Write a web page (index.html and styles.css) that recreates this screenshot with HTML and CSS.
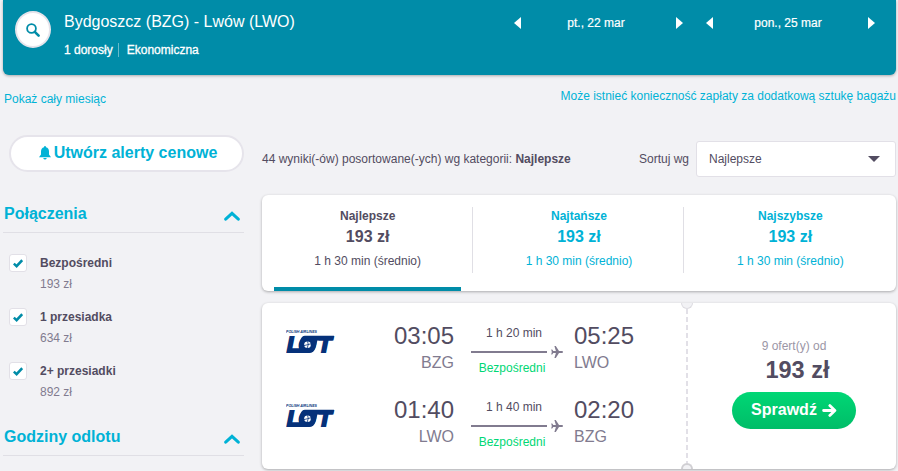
FILE: index.html
```html
<!DOCTYPE html>
<html lang="pl">
<head>
  <meta charset="UTF-8">
  <meta name="viewport" content="width=device-width, initial-scale=1.0">
  <title>Bydgoszcz (BZG) - Lwów (LWO)</title>
  <link rel="stylesheet" href="styles.css">
</head>
<body>
  <svg class="sprite" width="0" height="0">
    <symbol id="check" viewBox="0 0 10 9">
      <path d="M0.8 4.6 L3.6 7.2 L9.2 1.2" fill="none" stroke="#008ca8" stroke-width="2.5"/>
    </symbol>
    <symbol id="chevron" viewBox="0 0 16 10">
      <path d="M1.7 8.2 L8 2.4 L14.3 8.2" fill="none" stroke="#00b2d6" stroke-width="3" stroke-linecap="round"/>
    </symbol>
    <symbol id="plane" viewBox="0 0 12 12">
      <path d="M3.4 0 H4.8 L8 5 H11 Q12 5.2 12 6 Q12 6.8 11 7 H8 L4.8 12 H3.4 L4.9 7 H2.3 L1.2 8.6 H0.2 L0.8 6 L0.2 3.4 H1.2 L2.3 5 H4.9 Z" fill="#817b8f"/>
    </symbol>
  </svg>

  <div class="page">
    <header class="header">
      <button class="search-button">
        <svg width="14" height="14" viewBox="0 0 14 14"><circle cx="5.5" cy="5.5" r="4.4" fill="none" stroke="#008ca8" stroke-width="1.8"/><path d="M8.8 8.8 L12.6 12.6" stroke="#008ca8" stroke-width="2.6" stroke-linecap="round"/></svg>
      </button>
      <div class="summary">
        <h1>Bydgoszcz (BZG) - Lwów (LWO)</h1>
        <p><span class="passengers">1 dorosły</span><span class="cabin">Ekonomiczna</span></p>
      </div>
      <div class="dates">
        <div class="date"><i class="arrow-left"></i><span>pt., 22 mar</span><i class="arrow-right"></i></div>
        <div class="date"><i class="arrow-left"></i><span>pon., 25 mar</span><i class="arrow-right"></i></div>
      </div>
    </header>

    <div class="links">
      <a class="month-link">Pokaż cały miesiąc</a>
      <a class="baggage-link">Może istnieć konieczność zapłaty za dodatkową sztukę bagażu</a>
    </div>

    <div class="content">
      <aside class="sidebar">
        <button class="alert-button">
          <svg width="12" height="14" viewBox="0 0 12 14"><path d="M6 0 Q7 0 7 1.2 Q10 2 10 5.5 V8.6 L12 11.2 H0 L2 8.6 V5.5 Q2 2 5 1.2 Q5 0 6 0 Z M4.2 12 H7.8 Q7.3 13.6 6 13.6 Q4.7 13.6 4.2 12 Z" fill="#00b2d6"/></svg>
          <span>Utwórz alerty cenowe</span>
        </button>
        <div class="filter-title"><h2>Połączenia</h2><svg width="16" height="10"><use href="#chevron"/></svg></div>
        <ul class="filters">
          <li>
            <span class="checkbox"><svg width="10" height="9"><use href="#check"/></svg></span>
            <div><b>Bezpośredni</b><span>193 zł</span></div>
          </li>
          <li>
            <span class="checkbox"><svg width="10" height="9"><use href="#check"/></svg></span>
            <div><b>1 przesiadka</b><span>634 zł</span></div>
          </li>
          <li>
            <span class="checkbox"><svg width="10" height="9"><use href="#check"/></svg></span>
            <div><b>2+ przesiadki</b><span>892 zł</span></div>
          </li>
        </ul>
        <div class="filter-title"><h2>Godziny odlotu</h2><svg width="16" height="10"><use href="#chevron"/></svg></div>
      </aside>

      <main class="results">
        <div class="sort-row">
          <p>44 wyniki(-ów) posortowane(-ych) wg kategorii: <b>Najlepsze</b></p>
          <span class="sort-label">Sortuj wg</span>
          <div class="select"><span>Najlepsze</span><i class="caret"></i></div>
        </div>

        <div class="card tabs">
          <div class="tab active"><b>Najlepsze</b><strong>193 zł</strong><span>1 h 30 min (średnio)</span></div>
          <div class="tab"><b>Najtańsze</b><strong>193 zł</strong><span>1 h 30 min (średnio)</span></div>
          <div class="tab"><b>Najszybsze</b><strong>193 zł</strong><span>1 h 30 min (średnio)</span></div>
        </div>

        <div class="card ticket">
          <div class="legs">
            <div class="leg">
              <svg class="logo" width="52" height="30" viewBox="0 0 52 30">
                <text x="0" y="3.2" class="lot-small" textLength="31" lengthAdjust="spacingAndGlyphs">POLISH AIRLINES</text>
                <path d="M19 5.7 H48 L46.6 10.4 H31.4 L29.4 18 Q28 23 23 23 H5 L6 18.4 H13 Q12.5 16 14 11 Q15.5 5.7 19 5.7 Z" fill="#05317a"/>
                <text x="1 12.5 32" y="22" class="lot-big">LOT</text>
                <circle cx="21.5" cy="14.7" r="5.3" fill="#05317a"/>
                <circle cx="21.5" cy="14.7" r="3.3" fill="#fff"/>
                <path d="M18 15.6 L25 13.8 M21.2 18 L22.3 14.5 L21.5 11.4" fill="none" stroke="#05317a" stroke-width="0.8"/>
              </svg>
              <div class="stop depart"><span class="time">03:05</span><span class="code">BZG</span></div>
              <div class="route">
                <span class="duration">1 h 20 min</span>
                <div class="line"><hr><svg width="12" height="12"><use href="#plane"/></svg></div>
                <span class="direct">Bezpośredni</span>
              </div>
              <div class="stop"><span class="time">05:25</span><span class="code">LWO</span></div>
            </div>
            <div class="leg">
              <svg class="logo" width="52" height="30" viewBox="0 0 52 30">
                <text x="0" y="3.2" class="lot-small" textLength="31" lengthAdjust="spacingAndGlyphs">POLISH AIRLINES</text>
                <path d="M19 5.7 H48 L46.6 10.4 H31.4 L29.4 18 Q28 23 23 23 H5 L6 18.4 H13 Q12.5 16 14 11 Q15.5 5.7 19 5.7 Z" fill="#05317a"/>
                <text x="1 12.5 32" y="22" class="lot-big">LOT</text>
                <circle cx="21.5" cy="14.7" r="5.3" fill="#05317a"/>
                <circle cx="21.5" cy="14.7" r="3.3" fill="#fff"/>
                <path d="M18 15.6 L25 13.8 M21.2 18 L22.3 14.5 L21.5 11.4" fill="none" stroke="#05317a" stroke-width="0.8"/>
              </svg>
              <div class="stop depart"><span class="time">01:40</span><span class="code">LWO</span></div>
              <div class="route">
                <span class="duration">1 h 40 min</span>
                <div class="line"><hr><svg width="12" height="12"><use href="#plane"/></svg></div>
                <span class="direct">Bezpośredni</span>
              </div>
              <div class="stop"><span class="time">02:20</span><span class="code">BZG</span></div>
            </div>
          </div>
          <div class="offer">
            <i class="notch notch-top"></i>
            <i class="notch notch-bottom"></i>
            <span class="offer-count">9 ofert(y) od</span>
            <span class="offer-price">193 zł</span>
            <button class="offer-button">Sprawdź
              <svg width="15" height="13" viewBox="0 0 15 13"><path d="M1.6 6.5 H12.5 M7.8 1.6 L12.9 6.5 L7.8 11.4" fill="none" stroke="#fff" stroke-width="2.8" stroke-linecap="round" stroke-linejoin="round"/></svg>
            </button>
          </div>
        </div>
      </main>
    </div>
  </div>
</body>
</html>
```

FILE: styles.css
```css
* {
  box-sizing: border-box;
}
body {
  margin: 0;
  background-color: #f2f2f5;
  font-family: 'Liberation Sans', Arial, sans-serif;
  font-size: 12px;
  line-height: 18px;
  color: #524c61;
  overflow: hidden;
}
h1, h2, p, ul {
  margin: 0;
  padding: 0;
}
button {
  font-family: inherit;
  padding: 0;
  cursor: pointer;
}
svg {
  display: block;
  flex-shrink: 0;
}
.sprite {
  position: absolute;
}
.page {
  height: 471px;
  padding: 0 2px 0 3px;
  overflow: hidden;
}

/* header */
.header {
  display: flex;
  height: 75px;
  padding: 11px 21px 0 12px;
  background-color: #008ca8;
  border-radius: 0 0 6px 6px;
  box-shadow: 0 1px 3px rgba(0, 0, 0, 0.3);
  color: #fff;
}
.search-button {
  display: flex;
  justify-content: center;
  align-items: center;
  width: 36px;
  height: 37px;
  border: 2px solid #e6e4eb;
  border-radius: 50%;
  background-color: #fff;
}
.summary {
  flex: 1;
  padding-left: 13px;
}
.summary h1 {
  font-size: 16px;
  font-weight: normal;
  line-height: 22px;
}
.summary p {
  display: flex;
  align-items: center;
  margin-top: 9px;
  line-height: 16px;
  -webkit-text-stroke: 0.3px #fff;
}
.passengers {
  padding-right: 5px;
  border-right: 1px solid #66bacb;
  line-height: 14px;
}
.cabin {
  padding-left: 8px;
}
.dates {
  display: flex;
  gap: 23px;
}
.date {
  display: flex;
  justify-content: space-between;
  align-items: center;
  width: 169px;
  height: 24px;
  -webkit-text-stroke: 0.2px #fff;
}
.date span {
  margin-right: 5px;
}
.arrow-left, .arrow-right {
  border-top: 6px solid transparent;
  border-bottom: 6px solid transparent;
}
.arrow-left {
  border-right: 7px solid #fff;
}
.arrow-right {
  border-left: 7px solid #fff;
}

.links {
  display: flex;
  justify-content: space-between;
  height: 60px;
  padding-top: 12px;
  color: #00b2d6;
}
.month-link {
  padding: 3px 0 0 1px;
}

/* filters */
.content {
  display: flex;
  gap: 18px;
}
.sidebar {
  width: 241px;
}
.alert-button {
  display: flex;
  justify-content: center;
  align-items: center;
  gap: 3px;
  width: 235px;
  height: 37px;
  margin: 0 0 24px 6px;
  padding: 0 0 1px 3px;
  border: 2px solid #e6e4eb;
  border-radius: 19px;
  background-color: #fff;
  color: #00b2d6;
  font-size: 16px;
  font-weight: bold;
}
.filter-title {
  display: flex;
  justify-content: space-between;
  align-items: center;
  height: 37px;
  padding: 0 4px 0 1px;
  border-bottom: 1px solid #e0dfe5;
  color: #00b2d6;
}
.filter-title h2 {
  font-size: 16px;
  line-height: 34px;
}
.filter-title svg {
  margin-top: 3px;
}
.filters {
  height: 186px;
  padding: 21px 0 0 6px;
  list-style: none;
}
.filters li {
  display: flex;
  gap: 13px;
  height: 54px;
}
.filters b, .filters div span {
  display: block;
}
.filters div span {
  margin-top: 3px;
  color: #817b8f;
}
.checkbox {
  display: flex;
  justify-content: center;
  align-items: center;
  width: 18px;
  height: 18px;
  border: 1px solid #e2e0e7;
  border-radius: 3px;
  background-color: #fff;
}

/* results */
.results {
  width: 634px;
}
.sort-row {
  display: flex;
  align-items: center;
  height: 36px;
  margin: 6px 0 18px;
}
.sort-row p {
  flex: 1;
}
.sort-label {
  margin-right: 7px;
}
.select {
  display: flex;
  justify-content: space-between;
  align-items: center;
  width: 200px;
  height: 36px;
  padding: 0 15px 0 12px;
  border: 1px solid #e2e0e7;
  border-radius: 3px;
  background-color: #fff;
}
.caret {
  border: 6px solid transparent;
  border-top-color: #524c61;
  border-bottom: 0;
}
.card {
  border-radius: 6px;
  background-color: #fff;
  box-shadow: 0 1px 3px rgba(0, 0, 0, 0.3);
}
.tabs {
  display: flex;
  height: 96px;
  margin-bottom: 12px;
  background-image: linear-gradient(#e0dfe5, #e0dfe5), linear-gradient(#e0dfe5, #e0dfe5);
  background-position: 210px 12px, 421px 12px;
  background-size: 1px 66px;
  background-repeat: no-repeat;
}
.tab {
  display: flex;
  flex: 1;
  flex-direction: column;
  align-items: center;
  margin: 0 12px;
  padding-top: 12px;
  color: #00b2d6;
}
.tab strong {
  font-size: 16px;
  line-height: 24px;
}
.tab span {
  margin-top: 3px;
}
.tab.active {
  border-bottom: 4px solid #008ca8;
  color: #524c61;
}

.ticket {
  display: flex;
  height: 166px;
}
.legs {
  width: 424px;
  padding-top: 18px;
}
.leg {
  display: flex;
  height: 74px;
  padding-left: 24px;
}
.logo {
  margin-top: 9px;
}
.lot-small {
  font-size: 4px;
  font-weight: bold;
  font-style: italic;
  fill: #05317a;
}
.lot-big {
  font-size: 22px;
  font-weight: bold;
  font-style: italic;
  fill: #05317a;
  stroke: #05317a;
  stroke-width: 2;
}
.stop {
  display: flex;
  flex-direction: column;
}
.depart {
  width: 116px;
  align-items: flex-end;
}
.time {
  font-size: 24px;
  line-height: 30px;
}
.code {
  font-size: 16px;
  line-height: 24px;
  color: #817b8f;
}
.route {
  width: 86px;
  margin: 0 17px;
  padding-top: 3px;
  text-align: center;
}
.duration, .direct {
  display: block;
}
.direct {
  padding-right: 4px;
  color: #00d775;
}
.line {
  display: flex;
  align-items: center;
  gap: 4px;
  width: 92px;
  height: 14px;
  margin-top: 3px;
}
.line hr {
  width: 76px;
  height: 2px;
  margin: 0;
  border: 0;
  background-color: #817b8f;
}
.offer {
  position: relative;
  display: flex;
  flex: 1;
  flex-direction: column;
  align-items: center;
  padding: 34px 0 0 6px;
  background: repeating-linear-gradient(#e2e0e7 0 5px, transparent 5px 8px) 0 6px / 2px 154px no-repeat;
}
.offer-count {
  color: #9b96a6;
}
.offer-price {
  margin: 0 0 7px 7px;
  font-size: 23.5px;
  font-weight: bold;
  line-height: 30px;
}
.offer-button {
  display: flex;
  justify-content: center;
  align-items: center;
  gap: 5px;
  width: 124px;
  height: 37px;
  padding-bottom: 1px;
  border: 0;
  border-radius: 19px;
  background: linear-gradient(#00d775, #00bd68);
  color: #fff;
  font-size: 16px;
  font-weight: bold;
}
/* half circles cut out of the ticket edge */
.notch {
  position: absolute;
  left: -5px;
  width: 12px;
  height: 6px;
  background-color: #f2f2f5;
}
.notch-top {
  top: 0;
  border: 1px solid #dddce1;
  border-top: 0;
  border-radius: 0 0 6px 6px;
}
.notch-bottom {
  bottom: 0;
  border: 2px solid #d0cfd3;
  border-bottom: 0;
  border-radius: 6px 6px 0 0;
}
```
